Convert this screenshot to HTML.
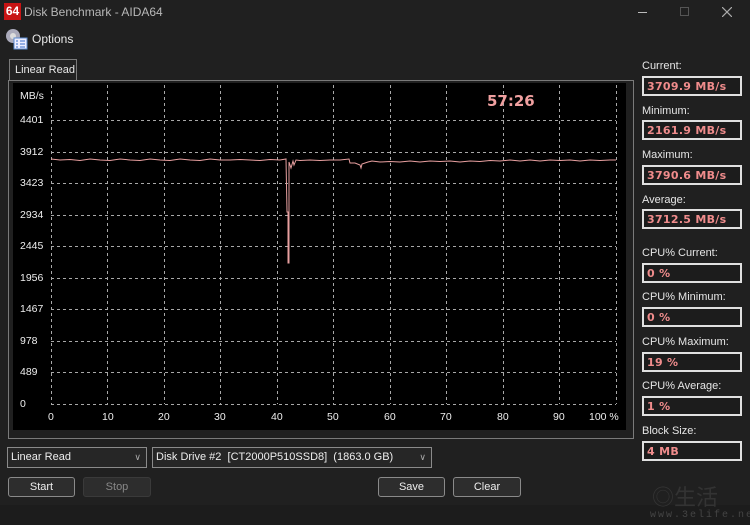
<!DOCTYPE html>
<html><head><meta charset="utf-8"><style>
*{margin:0;padding:0;box-sizing:border-box}
body{width:750px;height:525px;background:#202020;font-family:"Liberation Sans",sans-serif;color:#e8e8e8;position:relative;overflow:hidden;font-size:11px}
.a{position:absolute;white-space:nowrap}
.lbl{position:absolute;left:642px;font-size:11px;color:#e6e6e6}
.box{position:absolute;left:642px;width:100px;height:20px;border:2px solid #e0e0e0;background:#1c1c1c;color:#f08c8c;font-weight:bold;font-family:"DejaVu Sans",sans-serif;font-size:11px;padding:2px 0 0 3px;letter-spacing:.3px}
.btn{position:absolute;top:477px;height:20px;border:1px solid #8a8a8a;border-radius:3px;background:#2d2d2d;text-align:center;font-size:11px;line-height:18px;color:#eee}
.sel{position:absolute;top:447px;height:21px;border:1px solid #8a8a8a;background:#262626;font-size:11px;line-height:19px;padding-left:3px;color:#eee;white-space:nowrap}
.sel span{position:absolute;right:5px;top:0;color:#aaa;font-size:9px}
.yl{position:absolute;left:20px;font-size:10.5px;color:#eee}
.xl{position:absolute;top:411px;font-size:10.5px;color:#eee}
</style></head><body>
<div class="a" style="left:4px;top:3px;width:17px;height:17px;background:#c81414;color:#fff;font-weight:bold;font-size:12px;line-height:17px;text-align:center">64</div>
<div class="a" style="left:24px;top:5px;font-size:12px;color:#b8b8b8">Disk Benchmark - AIDA64</div>
<div class="a" style="left:638px;top:12px;width:9px;height:1px;background:#bbb"></div>
<div class="a" style="left:680px;top:7px;width:9px;height:9px;border:1px solid #555"></div>
<svg class="a" style="left:722px;top:7px" width="10" height="10"><path d="M0 0L10 10M10 0L0 10" stroke="#aaa" stroke-width="1.2"/></svg>
<svg class="a" style="left:4px;top:27px" width="24" height="24"><circle cx="9" cy="9" r="7" fill="#aab"/><circle cx="9" cy="9" r="3" fill="#ddd"/><rect x="10" y="11" width="13" height="11" fill="#eef" stroke="#5b8bd0"/><path d="M12 14h2M16 14h5M12 17h2M16 17h5M12 20h2M16 20h5" stroke="#3a6ec8"/></svg>
<div class="a" style="left:32px;top:32px;font-size:12px">Options</div>
<div class="a" style="left:9px;top:59px;width:68px;height:22px;border:1px solid #7a7a7a;border-bottom:none;background:#222;font-size:11px;padding:4px 0 0 5px">Linear Read</div>
<div class="a" style="left:8px;top:80px;width:626px;height:359px;border:1px solid #7a7a7a"></div>
<div class="a" style="left:13px;top:83px;width:613px;height:347px;background:#000"></div>
<svg class="a" style="left:0;top:0" width="640" height="440">
<g stroke="#a8a8a8" stroke-width="1" stroke-dasharray="3,3" fill="none">
<path d="M51.5 85V404M107.5 85V404M164.5 85V404M220.5 85V404M277.5 85V404M333.5 85V404M390.5 85V404M446.5 85V404M503.5 85V404M559.5 85V404M616.5 85V404"/>
<path d="M51 120.5H616M51 152.5H616M51 183.5H616M51 215.5H616M51 246.5H616M51 278.5H616M51 309.5H616M51 341.5H616M51 372.5H616M51 404.5H616"/>
</g>
<path fill="none" stroke="#e8a0a0" stroke-width="1" d="M51 159 L60 160 L70 159.5 L80 160.5 L90 159 L100 160 L110 160.5 L120 159 L130 160 L140 160.5 L150 159 L160 160 L170 160.5 L180 159 L190 160 L200 160.5 L210 159 L220 160 L230 160 L240 159.5 L250 160 L260 160.5 L270 159.5 L280 160 L286 159 L287 212 L288 212 L288 263 L289 263 L289 162 L291 168 L293 161 L294 165 L296 160 L300 160.5 L310 160 L320 160.5 L330 160 L340 160 L349 159 L350 163 L355 163 L360 165 L361 168 L362 164 L368 162 L372 161 L380 162 L390 161.5 L400 162 L410 161 L420 162 L430 161 L440 161.5 L450 161 L460 162 L470 161 L480 161.5 L490 160.5 L500 161 L510 160 L520 161 L530 160 L540 161 L550 160 L560 160.5 L570 160 L580 161 L590 160 L600 160.5 L610 160 L616 160"/>
</svg>
<div class="a" style="left:487px;top:92px;font-size:15px;font-weight:bold;color:#f0a0a0;font-family:'DejaVu Sans',sans-serif">57:26</div>
<div class="yl" style="top:90px">MB/s</div>
<div class="yl" style="top:114px">4401</div>
<div class="yl" style="top:146px">3912</div>
<div class="yl" style="top:177px">3423</div>
<div class="yl" style="top:209px">2934</div>
<div class="yl" style="top:240px">2445</div>
<div class="yl" style="top:272px">1956</div>
<div class="yl" style="top:303px">1467</div>
<div class="yl" style="top:335px">978</div>
<div class="yl" style="top:366px">489</div>
<div class="yl" style="top:398px">0</div>
<div class="xl" style="left:48px">0</div><div class="xl" style="left:102px">10</div><div class="xl" style="left:158px">20</div><div class="xl" style="left:214px">30</div><div class="xl" style="left:271px">40</div><div class="xl" style="left:327px">50</div><div class="xl" style="left:384px">60</div><div class="xl" style="left:440px">70</div><div class="xl" style="left:497px">80</div><div class="xl" style="left:553px">90</div><div class="xl" style="left:589px">100 %</div>
<div class="lbl" style="top:60px">Current:</div><div class="box" style="top:76px">3709.9 MB/s</div>
<div class="lbl" style="top:105px">Minimum:</div><div class="box" style="top:120px">2161.9 MB/s</div>
<div class="lbl" style="top:149px">Maximum:</div><div class="box" style="top:165px">3790.6 MB/s</div>
<div class="lbl" style="top:194px">Average:</div><div class="box" style="top:209px">3712.5 MB/s</div>
<div class="lbl" style="top:247px">CPU% Current:</div><div class="box" style="top:263px">0 %</div>
<div class="lbl" style="top:291px">CPU% Minimum:</div><div class="box" style="top:307px">0 %</div>
<div class="lbl" style="top:336px">CPU% Maximum:</div><div class="box" style="top:352px">19 %</div>
<div class="lbl" style="top:380px">CPU% Average:</div><div class="box" style="top:396px">1 %</div>
<div class="lbl" style="top:425px">Block Size:</div><div class="box" style="top:441px">4 MB</div>
<div class="sel" style="left:7px;width:140px">Linear Read<span>∨</span></div>
<div class="sel" style="left:152px;width:280px">Disk Drive #2&nbsp; [CT2000P510SSD8]&nbsp; (1863.0 GB)<span>∨</span></div>
<div class="btn" style="left:8px;width:67px">Start</div>
<div class="btn" style="left:83px;width:68px;color:#888;border-color:#3a3a3a">Stop</div>
<div class="btn" style="left:378px;width:67px">Save</div>
<div class="btn" style="left:453px;width:68px">Clear</div>
<div class="a" style="left:0;top:505px;width:750px;height:20px;background:#1c1c1c"></div>
<div class="a" style="left:652px;top:480px;font-size:22px;color:#333;font-family:'Noto Sans CJK SC',sans-serif">◎生活</div>
<div class="a" style="left:650px;top:510px;font-size:10px;color:#444;letter-spacing:2px;font-family:'Liberation Mono',monospace">www.3elife.net</div>
</body></html>
